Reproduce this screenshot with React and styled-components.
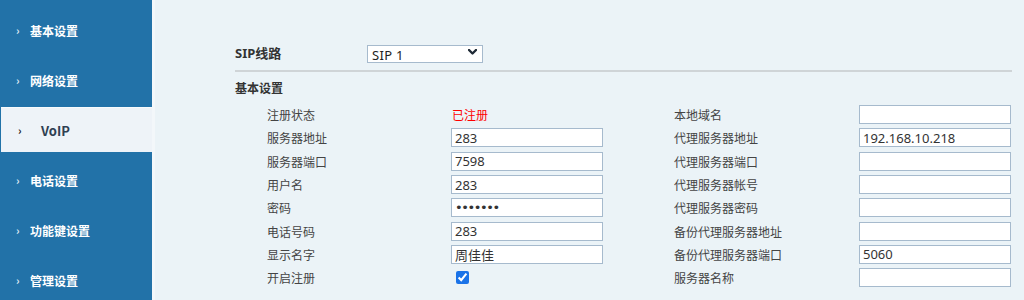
import React from "react";
import styled, { createGlobalStyle } from "styled-components";

const Global = createGlobalStyle`
  html, body { margin: 0; padding: 0; }
  body { font-family: "Noto Sans", "Noto Sans CJK SC", sans-serif; background: #ebf3f7; }
  #root { height: 300px; overflow: hidden; }
`;

const Page = styled.div`
  display: flex;
  height: 300px;
  overflow: hidden;
`;

const Sidebar = styled.nav`
  width: 152px;
  flex: none;
  background: #2272a8;
  padding-top: 5px;
  display: flex;
  flex-direction: column;
`;

const NavItem = styled.div`
  height: ${(p) => (p.$active ? "45px" : "50px")};
  margin: ${(p) => (p.$active ? "2px 0 3px 1px" : "0")};
  flex: none;
  display: flex;
  align-items: center;
  padding-left: ${(p) => (p.$active ? "17px" : "16px")};
  background: ${(p) => (p.$active ? "#eef3f8" : "transparent")};
  border-top: ${(p) => (p.$active ? "1px solid #f7fafc" : "none")};
  box-sizing: border-box;
  color: ${(p) => (p.$active ? "#2e3f52" : "#ffffff")};
  font-family: "Noto Sans CJK SC", sans-serif;
  font-weight: bold;
  font-size: ${(p) => (p.$active ? "13px" : "12px")};
`;

const Chevron = styled.span`
  width: ${(p) => (p.$active ? "23px" : "14px")};
  font-size: 11px;
  font-weight: bold;
  color: ${(p) => (p.$active ? "#222" : "#dfe9f2")};
`;

const Divider = styled.div`
  width: 3px;
  flex: none;
  background: #f3f7fa;
`;

const Main = styled.main`
  flex: 1;
  padding: 43px 12px 0 80px;
  color: #444;
`;

const SipRow = styled.div`
  display: flex;
  align-items: center;
  height: 18px;
`;

const SipLabel = styled.div`
  width: 132px;
  font-family: "Noto Sans", "Noto Sans CJK SC", sans-serif;
  font-weight: bold;
  font-size: 13px;
  color: #333;
`;

const SelectWrap = styled.div`
  position: relative;
  width: 116px;
  height: 18px;
`;

const Select = styled.select`
  appearance: none;
  width: 100%;
  height: 100%;
  box-sizing: border-box;
  border: 1px solid #a6bacd;
  background: #fff;
  font-family: "Noto Sans", sans-serif;
  font-size: 13px;
  letter-spacing: 0.3px;
  color: #222;
  padding: 0 4px;
  margin: 0;
  outline: none;
`;

const SelectArrow = styled.svg`
  position: absolute;
  right: 6px;
  top: 6px;
  pointer-events: none;
`;

const Rule = styled.hr`
  margin: 9px 0 0 0;
  border: none;
  height: 2px;
  background: #cfd4d7;
`;

const SectionTitle = styled.div`
  margin-top: 7px;
  line-height: 18px;
  font-family: "Noto Sans CJK SC", sans-serif;
  font-weight: bold;
  font-size: 12px;
  color: #333;
`;

const FormGrid = styled.div`
  margin: 6px 0 0 32px;
  display: grid;
  grid-template-columns: 184px 152px 71px 185px 152px;
  grid-auto-rows: 23.3px;
  align-items: center;
`;

const Label = styled.div`
  font-family: "Noto Sans CJK SC", sans-serif;
  font-size: 12px;
  color: #444;
`;

const Status = styled.div`
  padding-left: 1px;
  font-family: "Noto Sans CJK SC", sans-serif;
  font-size: 12px;
  color: #ff0000;
`;

const TextInput = styled.input`
  width: 152px;
  height: 19px;
  box-sizing: border-box;
  border: 1px solid #a6bacd;
  background: #fff;
  padding: 0 3px;
  margin: 0;
  font-family: ${(p) => (p.type === "password" ? '"DejaVu Sans", sans-serif' : '"Noto Sans", "Noto Sans CJK SC", sans-serif')};
  font-size: 13px;
  color: #333;
  outline: none;
  letter-spacing: ${(p) => (p.type === "password" ? "-1.4px" : "0")};
`;

const Check = styled.input`
  width: 13px;
  height: 13px;
  margin: 0 0 0 5px;
  accent-color: #1a73e8;
`;

const Spacer = styled.div``;

const nav = [
  { t: "基本设置" },
  { t: "网络设置" },
  { t: "VoIP", active: true },
  { t: "电话设置" },
  { t: "功能键设置" },
  { t: "管理设置" },
];

const left = [
  { l: "注册状态", status: "已注册" },
  { l: "服务器地址", v: "283" },
  { l: "服务器端口", v: "7598" },
  { l: "用户名", v: "283" },
  { l: "密码", v: "1234567", pw: true },
  { l: "电话号码", v: "283" },
  { l: "显示名字", v: "周佳佳" },
  { l: "开启注册", check: true },
];

const right = [
  { l: "本地域名", v: "" },
  { l: "代理服务器地址", v: "192.168.10.218" },
  { l: "代理服务器端口", v: "" },
  { l: "代理服务器帐号", v: "" },
  { l: "代理服务器密码", v: "" },
  { l: "备份代理服务器地址", v: "" },
  { l: "备份代理服务器端口", v: "5060" },
  { l: "服务器名称", v: "" },
];

function LeftValue({ item }) {
  if (item.status) return <Status>{item.status}</Status>;
  if (item.check) return <div><Check type="checkbox" defaultChecked /></div>;
  return <TextInput type={item.pw ? "password" : "text"} defaultValue={item.v} />;
}

export default function App() {
  return (
    <>
      <Global />
      <Page>
        <Sidebar>
          {nav.map((n) => (
            <NavItem key={n.t} $active={n.active}>
              <Chevron $active={n.active}>›</Chevron>
              {n.t}
            </NavItem>
          ))}
        </Sidebar>
        <Divider />
        <Main>
          <SipRow>
            <SipLabel>SIP线路</SipLabel>
            <SelectWrap>
              <Select defaultValue="SIP 1">
                <option>SIP 1</option>
                <option>SIP 2</option>
              </Select>
              <SelectArrow width="9" height="6" viewBox="0 0 9 6">
                <path d="M1 1 L4.5 4.5 L8 1" fill="none" stroke="#1f2a36" strokeWidth="2.4" strokeLinecap="round" strokeLinejoin="round" />
              </SelectArrow>
            </SelectWrap>
          </SipRow>
          <Rule />
          <SectionTitle>基本设置</SectionTitle>
          <FormGrid>
            {left.map((item, i) => (
              <React.Fragment key={item.l}>
                <Label>{item.l}</Label>
                <LeftValue item={item} />
                <Spacer />
                <Label>{right[i].l}</Label>
                <TextInput type="text" defaultValue={right[i].v} />
              </React.Fragment>
            ))}
          </FormGrid>
        </Main>
      </Page>
    </>
  );
}
